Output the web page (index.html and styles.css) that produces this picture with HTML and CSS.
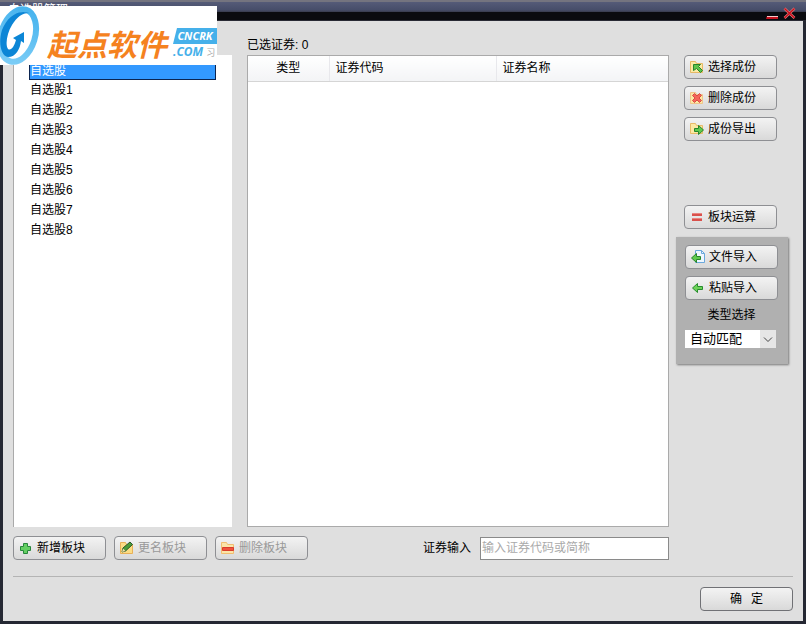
FILE: index.html
```html
<!DOCTYPE html>
<html lang="zh-CN">
<head>
<meta charset="utf-8">
<title>自选股管理</title>
<link rel="stylesheet" href="styles.css">
</head>
<body>
<div class="window">
  <header class="titlebar">
    <h1 class="title">自选股管理</h1>
    <div class="controls">
      <button class="control" type="button" aria-label="最小化">
        <svg width="13" height="14" viewBox="0 0 13 14"><path d="M1 10h11v3H0z" fill="#c4101c"/><path d="M1 10.500h11" stroke="#f6c8c8"/></svg>
      </button>
      <button class="control" type="button" aria-label="关闭">
        <svg width="13" height="14" viewBox="0 0 13 14"><path d="M1.500 2.500l10 9.500M11.500 2.500l-10 9.500" stroke="#e08a8a" stroke-width="2.500"/><path d="M1.500 2.500l10 9.500M11.500 2.500l-10 9.500" stroke="#c8101c" stroke-width="1.600"/></svg>
      </button>
    </div>
  </header>

  <main class="content">
    <div class="panes">
      <ul class="tree">
        <li class="row selected">自选股</li>
        <li class="row">自选股1</li>
        <li class="row">自选股2</li>
        <li class="row">自选股3</li>
        <li class="row">自选股4</li>
        <li class="row">自选股5</li>
        <li class="row">自选股6</li>
        <li class="row">自选股7</li>
        <li class="row">自选股8</li>
      </ul>

      <section class="chosen">
        <h2 class="caption">已选证券: 0</h2>
        <div class="listbox">
          <table class="securities">
            <thead>
              <tr><th class="kind">类型</th><th class="code">证券代码</th><th class="name">证券名称</th></tr>
            </thead>
          </table>
        </div>
      </section>

      <aside class="side">
        <div class="stack">
          <button class="btn" type="button">
            <svg class="icon" viewBox="0 0 16 16"><path d="M1.500 13.500v-11h5l1 2h6v9z" fill="#fbe9a4" stroke="#e5b865"/><path d="M4.500 5.500h7l-2 2 4 4-2 2-4-4-3 2z" fill="#5dc34b" stroke="#27842b"/></svg>
            选择成份
          </button>
          <button class="btn" type="button">
            <svg class="icon" viewBox="0 0 16 16"><path d="M1.500 13.500v-11h5l1 2h6v9z" fill="#fbe9a4" stroke="#efc58a"/><path d="M3.500 5.500l2-2 2.500 2.500 2.500-2.500 2 2-2.500 2.500 2.500 2.500-2 2-2.500-2.500-2.500 2.500-2-2 2.500-2.500z" fill="#f4665a" stroke="#d94c44"/></svg>
            删除成份
          </button>
          <button class="btn" type="button">
            <svg class="icon" viewBox="0 0 16 16"><path d="M1.500 12.500v-10h5l1 2h6v8z" fill="#fbe9a4" stroke="#e8bb68"/><path d="M5.500 7.500h4v-3l5 4.500-5 4.500v-3h-4z" fill="#5ecb4d" stroke="#27842b"/></svg>
            成份导出
          </button>
        </div>
        <button class="btn calc" type="button">
          <svg class="icon" viewBox="0 0 16 16"><path d="M3 4h10v3H3zM3 9h10v3H3z" fill="#d9514c"/><path d="M3 4.500h10M3 9.500h10" stroke="#ea8580"/></svg>
          板块运算
        </button>
        <div class="import">
          <button class="btn" type="button">
            <svg class="icon" viewBox="0 0 16 16"><path d="M5.500 1.500h6l3 3v9h-9z" fill="#eef7ff" stroke="#6ba8dc"/><path d="M11.500 1.500v3h3" fill="none" stroke="#6ba8dc"/><path d="M10.500 7.500h-4v-3l-5 4.500 5 4.500v-3h4z" fill="#5ecb4d" stroke="#27842b"/></svg>
            文件导入
          </button>
          <button class="btn" type="button">
            <svg class="icon" viewBox="0 0 16 16"><path d="M12.500 6.500h-5v-3l-5 4.500 5 4.500v-3h5z" fill="#6cd258" stroke="#278d2d"/></svg>
            粘贴导入
          </button>
          <label class="import-label" for="kind">类型选择</label>
          <div class="select-wrap">
            <select class="select" id="kind"><option>自动匹配</option></select>
            <svg class="chevron" viewBox="0 0 16 18"><path d="M4 7.500l4 4 4-4" fill="none" stroke="#444"/></svg>
          </div>
        </div>
      </aside>
    </div>

    <div class="toolbar">
      <div class="actions">
        <button class="btn" type="button">
          <svg class="icon" viewBox="0 0 16 16"><path d="M5.500 3.500h4v3h3v4h-3v3h-4v-3h-3v-4h3z" fill="#63cf62" stroke="#28863c"/></svg>
          新增板块
        </button>
        <button class="btn" type="button" disabled>
          <svg class="icon" viewBox="0 0 16 16"><path d="M1.500 13.500v-11h5l1 2h6v9z" fill="#fbdc85" stroke="#e8b058"/><path d="M3 12l1-4 7-6 2.500 2.500-7 6.500z" fill="#4a9c38" stroke="#27542a"/><path d="M3 12l1-3.500 2.500 2.500z" fill="#f5dfaa"/></svg>
          更名板块
        </button>
        <button class="btn" type="button" disabled>
          <svg class="icon" viewBox="0 0 16 16"><path d="M1.500 13.500v-11h5l1 2h6v9z" fill="#fbe5a8" stroke="#f0bd70"/><path d="M2.500 7.500h11v3h-11z" fill="#f0523c" stroke="#d83d2b"/></svg>
          删除板块
        </button>
      </div>
      <div class="search">
        <label for="security">证券输入</label>
        <input class="field" id="security" type="text" placeholder="输入证券代码或简称">
      </div>
    </div>

    <footer class="footer">
      <button class="btn ok" type="button"><span>确</span><span>定</span></button>
    </footer>
  </main>

  <div class="watermark">
    <svg class="swirl" viewBox="0 0 41 59">
      <defs><linearGradient id="ring" x1="0" y1="0" x2="0" y2="1"><stop offset="0" stop-color="#48b4ee"/><stop offset="1" stop-color="#7accf6"/></linearGradient></defs>
      <ellipse cx="18" cy="29.500" rx="17" ry="27" transform="rotate(17 18 29.500)" fill="none" stroke="url(#ring)" stroke-width="6"/>
      <path d="M29 7C18 3 7 11 2 24-2 37 1 50 8 51 16 51 20 43 21 35L24 37V26L13 32 16 34C14 41 11 45 8 43 5 39 7 27 12 19 17 11 22 7 29 7Z" fill="#0c86d6"/>
    </svg>
    <span class="brand">起点软件</span>
    <span class="domain"><span class="tag">CNCRK</span><span class="tld">.COM <small>习</small></span></span>
  </div>
</div>
</body>
</html>
```
FILE: styles.css
```css
* { box-sizing: border-box; }

body {
  margin: 0;
  background: #282b36;
  font: 12px/16px "Liberation Sans", "Noto Sans CJK SC", sans-serif;
  color: #000;
}

button, input, select { font: inherit; color: inherit; }

.window {
  position: relative;
  display: flex;
  flex-direction: column;
  min-height: 100vh;
  padding: 0 3px 3px;
  background: #252833;
}

.titlebar {
  display: flex;
  justify-content: space-between;
  height: 21px;
  margin: 0 -3px;
  padding: 0 10px 0 8px;
  background: linear-gradient(#74747f 0 2px, #555b78 2px, #464d69 10px, #383b4c 12px, #0a0b0f 12px 20px, #292a34 20px);
}

.title {
  margin: 0;
  padding-top: 2px;
  font-size: 12px;
  line-height: 16px;
  font-weight: 400;
  color: #fff;
}

.controls { display: flex; gap: 4px; padding-top: 6px; }
.control { width: 13px; height: 14px; padding: 0; border: 0; background: none; }
.control svg { display: block; }

.content {
  flex: 1;
  display: flex;
  flex-direction: column;
  padding: 14px 10px 10px;
  background: #dfdfdf;
}

.panes {
  flex: 1;
  display: grid;
  grid-template-columns: 219px minmax(0, 1fr) 112px;
  padding-right: 5px;
}

.tree {
  margin: 20px 0 0;
  padding: 5px 16px 0 15px;
  list-style: none;
  border-left: 1px solid #aaa;
  background: #fff;
}

.row { height: 20px; padding-left: 1px; line-height: 20px; }
.selected { border: 1px solid #0b2450; padding-left: 0; background: #3399ff; color: #fff; }

.chosen { display: flex; flex-direction: column; margin: 0 7px 0 15px; }
.caption { margin: 0; padding-top: 2px; height: 20px; font-size: 12px; line-height: 16px; font-weight: 400; }
.listbox { flex: 1; border: 1px solid #aaa; background: #fff; }

.securities { width: 100%; border-collapse: collapse; table-layout: fixed; }
.securities th {
  height: 25px;
  padding: 0 6px;
  border-bottom: 1px solid #d5d5d5;
  border-right: 1px solid #e8e8ec;
  background: linear-gradient(#fff, #f3f4f6);
  font-weight: 400;
  text-align: left;
}
.securities .kind { width: 81px; text-align: center; }
.securities .code { width: 167px; }
.securities .name { border-right: 0; }

.side { padding-top: 20px; }
.stack { display: flex; flex-direction: column; gap: 7px; padding-left: 8px; }

.btn {
  display: flex;
  align-items: center;
  gap: 3px;
  width: 93px;
  height: 24px;
  padding: 0 4px;
  border: 1px solid #8e8f93;
  border-radius: 4px;
  background: linear-gradient(#f3f3f3, #d9d9d9);
  white-space: nowrap;
}
.btn:disabled { color: #999; }
.icon { width: 16px; height: 16px; flex: none; }

.calc { margin: 64px 0 0 8px; }

.import {
  display: flex;
  flex-direction: column;
  gap: 7px;
  margin-top: 8px;
  padding: 8px 10px 16px 9px;
  background: #b0b0b0;
  box-shadow: 1px 1px 2px #777;
}
.import-label { text-align: center; }

.select-wrap { position: relative; width: 91px; height: 18px; }
.select {
  width: 100%;
  height: 100%;
  padding: 0 16px 0 5px;
  border: 0;
  border-radius: 0;
  appearance: none;
  background: #fff;
  font-size: 13px;
  line-height: 18px;
}
.chevron {
  position: absolute;
  top: 0;
  right: 0;
  width: 16px;
  height: 18px;
  background: #e6e6e6;
  pointer-events: none;
}

.toolbar {
  display: flex;
  justify-content: space-between;
  margin-top: 9px;
  padding-right: 124px;
}
.actions { display: flex; gap: 8px; }
.search { display: flex; align-items: center; gap: 9px; }
.field {
  width: 189px;
  height: 23px;
  padding: 0 1px;
  border: 1px solid #8a8a8a;
  background: #fff;
}
.field::placeholder { color: #aaa; }

.footer {
  display: flex;
  justify-content: flex-end;
  margin-top: 16px;
  padding-top: 10px;
  border-top: 1px solid #b4b4b4;
}
.ok { gap: 9px; justify-content: center; border-color: #707175; }

/* Site badge laid over the window corner */
.watermark {
  position: absolute;
  top: 6px;
  left: 0;
  display: flex;
  width: 217px;
  height: 59px;
  background: #fff;
}
.swirl { width: 41px; height: 59px; flex: none; }
.brand {
  margin-left: 6px;
  font: italic 700 30px/74px "Noto Sans CJK SC", sans-serif;
  color: #f5821f;
}
.domain { display: flex; flex-direction: column; gap: 1px; margin-left: 6px; padding-top: 22px; }
.tag {
  width: 44px;
  background: #45b0ea;
  clip-path: polygon(4px 0, 100% 0, 100% 100%, 0 100%);
  font: italic 700 11px/16px "Open Sans", sans-serif;
  text-align: center;
  color: #fff;
}
.tld { font: italic 700 12px/14px "Open Sans", sans-serif; color: #45b0ea; white-space: nowrap; }
.tld small { font: 9px/12px "Noto Sans CJK SC", sans-serif; color: #aaa; }
```
